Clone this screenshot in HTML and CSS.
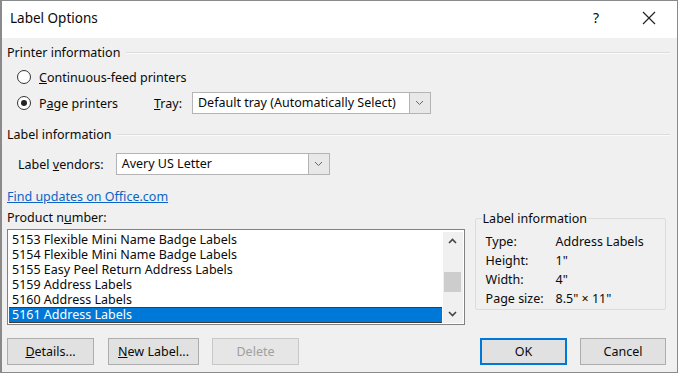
FILE: index.html
```html
<!DOCTYPE html>
<html lang="en">
<head>
  <meta charset="UTF-8">
  <title>Label Options</title>
  <link rel="stylesheet" href="styles.css">
</head>
<body>
  <div class="dialog">
    <div class="titlebar">
      <span class="title">Label Options</span>
      <span class="help">?</span>
      <span class="close">
        <svg width="14" height="14" viewBox="0 0 14 14"><path d="M1 1L13 13M13 1L1 13" stroke="#222" stroke-width="1.2" fill="none"/></svg>
      </span>
    </div>

    <div class="content">
      <div class="group-head"><span>Printer information</span><span class="rule"></span></div>

      <div class="radio-row first">
        <span class="radio"></span>
        <span><u>C</u>ontinuous-feed printers</span>
      </div>
      <div class="radio-row">
        <span class="radio checked"></span>
        <span class="page-label">P<u>a</u>ge printers</span>
        <span class="field-label"><u>T</u>ray:</span>
        <div class="select tray">
          <span class="select-text">Default tray (Automatically Select)</span>
          <span class="drop">
            <svg width="9" height="6" viewBox="0 0 9 6"><path d="M1 1L4.5 4.5L8 1" stroke="#666" stroke-width="1" fill="none"/></svg>
          </span>
        </div>
      </div>

      <div class="group-head second"><span>Label information</span><span class="rule"></span></div>

      <div class="vendor-row">
        <span class="field-label">Label <u>v</u>endors:</span>
        <div class="select vendor">
          <span class="select-text">Avery US Letter</span>
          <span class="drop">
            <svg width="9" height="6" viewBox="0 0 9 6"><path d="M1 1L4.5 4.5L8 1" stroke="#666" stroke-width="1" fill="none"/></svg>
          </span>
        </div>
      </div>

      <a class="link" href="#">Find updates on Office.com</a>

      <div class="product-area">
        <div class="product-col">
          <div class="product-label">Product n<u>u</u>mber:</div>
          <div class="listbox">
            <div class="items">
              <div class="item">5153 Flexible Mini Name Badge Labels</div>
              <div class="item">5154 Flexible Mini Name Badge Labels</div>
              <div class="item">5155 Easy Peel Return Address Labels</div>
              <div class="item">5159 Address Labels</div>
              <div class="item">5160 Address Labels</div>
              <div class="item selected">5161 Address Labels</div>
            </div>
            <div class="scrollbar">
              <span class="arrow">
                <svg width="9" height="6" viewBox="0 0 9 6"><path d="M1 5L4.5 1.5L8 5" stroke="#444" stroke-width="1.6" fill="none"/></svg>
              </span>
              <span class="track"><span class="thumb"></span></span>
              <span class="arrow">
                <svg width="9" height="6" viewBox="0 0 9 6"><path d="M1 1L4.5 4.5L8 1" stroke="#444" stroke-width="1.6" fill="none"/></svg>
              </span>
            </div>
          </div>
        </div>

        <fieldset class="info-box">
          <legend>Label information</legend>
          <div class="info-grid">
            <span>Type:</span><span>Address Labels</span>
            <span>Height:</span><span>1"</span>
            <span>Width:</span><span>4"</span>
            <span>Page size:</span><span>8.5" × 11"</span>
          </div>
        </fieldset>
      </div>

      <div class="button-row">
        <button class="btn details"><u>D</u>etails...</button>
        <button class="btn new-label"><u>N</u>ew Label...</button>
        <button class="btn" disabled>Delete</button>
        <span class="spacer"></span>
        <button class="btn default">OK</button>
        <button class="btn cancel">Cancel</button>
      </div>
    </div>
  </div>
</body>
</html>
```

FILE: styles.css
```css
body {
  margin: 0;
  padding: 0;
  background-color: #ffffff;
  font-family: "Noto Sans", "Open Sans", sans-serif;
  font-size: 12.5px;
  color: #0a0a0a;
}
.dialog {
  width: 675px;
  height: 371px;
  border: 1px solid #8a8a8a;
  border-left-width: 2px;
  background-color: #f0f0f0;
  display: flex;
  flex-direction: column;
}
.titlebar {
  height: 37px;
  box-sizing: border-box;
  padding-bottom: 4px;
  background-color: #fff;
  display: flex;
  align-items: center;
  padding-left: 8px;
  font-size: 13.5px;
}
.title {
  flex: 1;
}
.help {
  width: 20px;
  text-align: center;
  margin-right: 33px;
  font-size: 14px;
}
.close {
  width: 20px;
  margin-right: 18px;
  display: flex;
  justify-content: center;
}
.content {
  padding: 7px 11px 0 5px;
  display: flex;
  flex-direction: column;
}
.group-head {
  display: flex;
  align-items: center;
  height: 16px;
  line-height: 16px;
}
.group-head .rule {
  flex: 1;
  margin-left: 6px;
  margin-right: -4px;
  border-top: 1px solid #dcdcdc;
  border-bottom: 1px solid #fafafa;
}
.group-head.second {
  margin-top: 13px;
}
.radio-row {
  display: flex;
  align-items: center;
  height: 22px;
  padding-left: 10px;
}
.radio-row.first {
  margin-top: 5px;
  margin-bottom: 4px;
}
.radio {
  width: 12px;
  height: 12px;
  border: 1px solid #333;
  border-radius: 50%;
  background-color: #fff;
  margin-right: 8px;
  display: flex;
  align-items: center;
  justify-content: center;
}
.radio.checked::after {
  content: "";
  width: 6px;
  height: 6px;
  border-radius: 50%;
  background-color: #222;
}
.page-label {
  width: 115px;
}
.field-label {
  margin-right: 10px;
}
.select {
  display: flex;
  height: 22px;
  box-sizing: border-box;
}
.select-text {
  flex: 1;
  background-color: #fff;
  border: 1px solid #b4b4b4;
  border-right: none;
  padding-left: 5px;
  line-height: 20px;
}
.drop {
  width: 20px;
  border: 1px solid #b4b4b4;
  background-color: #e8e8e8;
  display: flex;
  align-items: center;
  justify-content: center;
}
.tray {
  width: 239px;
}
.vendor-row {
  display: flex;
  align-items: center;
  margin-top: 10px;
  padding-left: 11px;
}
.vendor-row .field-label {
  margin-right: 12px;
}
.vendor {
  width: 214px;
}
.link {
  margin-top: 14px;
  color: #0a64c8;
  height: 16px;
  line-height: 16px;
  align-self: flex-start;
}
.product-area {
  display: flex;
  margin-top: 5px;
}
.product-col {
  width: 459px;
}
.product-label {
  height: 16px;
  line-height: 16px;
  margin-bottom: 3px;
}
.listbox {
  height: 96px;
  box-sizing: border-box;
  border: 1px solid #828282;
  background-color: #fff;
  display: flex;
  padding: 2px 1px 1px 1px;
}
.items {
  flex: 1;
  display: flex;
  flex-direction: column;
  justify-content: flex-end;
}
.item {
  height: 15px;
  line-height: 15px;
  padding-left: 3px;
}
.item.selected {
  background-color: #0078d7;
  color: #fff;
  margin-right: 1px;
  border: 1px solid #3d3d3d;
  border-width: 1px 0 1px 0;
  height: 14px;
  line-height: 14px;
}
.scrollbar {
  width: 20px;
  background-color: #f0f0f0;
  display: flex;
  flex-direction: column;
}
.arrow {
  height: 18px;
  display: flex;
  align-items: center;
  justify-content: center;
}
.track {
  flex: 1;
  display: flex;
  align-items: flex-start;
  justify-content: center;
  padding-top: 22px;
}
.thumb {
  width: 17px;
  height: 20px;
  background-color: #cdcdcd;
}
.info-box {
  margin: 0 0 0 10px;
  padding: 7px 0 0 10px;
  width: 180px;
  height: 91px;
  box-sizing: content-box;
  border: 1px solid #dcdcdc;
  border-radius: 2px;
}
.info-box legend {
  padding: 0 1px;
  margin-left: -4px;
}
.info-grid {
  display: grid;
  grid-template-columns: 70px auto;
  row-gap: 3px;
  line-height: 16px;
}
.button-row {
  display: flex;
  margin-top: 13px;
}
.btn {
  font-family: inherit;
  font-size: 12.5px;
  color: #0a0a0a;
  width: 87px;
  height: 27px;
  background-color: #e1e1e1;
  border: 1px solid #adadad;
  margin: 0 13px 0 0;
  padding: 0;
}
.btn.details {
  margin-right: 14px;
}
.btn.new-label {
  width: 91px;
}
.btn:disabled {
  color: #a0a0a0;
  background-color: #e6e6e6;
  border-color: #c8c8c8;
}
.btn.default {
  border: 2px solid #0078d7;
}
.btn.cancel {
  width: 86px;
  margin-right: 0;
}
.spacer {
  flex: 1;
}
```
